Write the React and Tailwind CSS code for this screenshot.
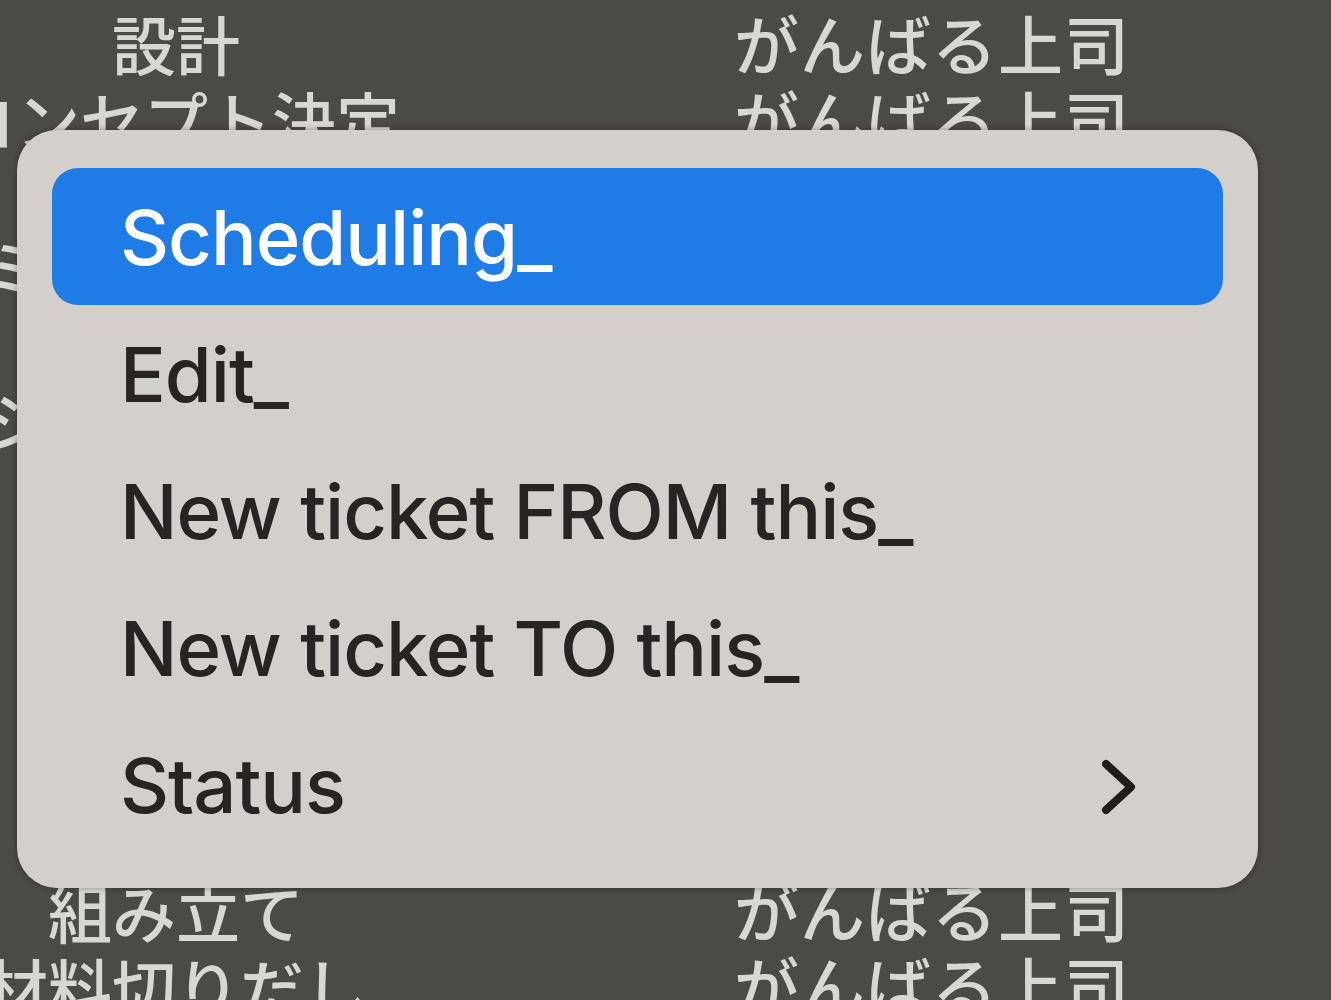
const bgRows = [
  { left: "設計", right: "がんばる上司", h: "h-[84px]" },
  { left: "コンセプト決定", right: "がんばる上司", h: "h-[68px]" },
  { left: "部品発注", right: "がんばる上司", h: "h-[76px]" },
  { left: "シミュレーション", right: "がんばる上司", h: "h-[76px]" },
  { left: "試作", right: "がんばる上司", h: "h-[76px]" },
  { left: "シャーシ調整", right: "がんばる上司", h: "h-[76px]" },
  { left: "検品", right: "がんばる上司", h: "h-[76px]" },
  { left: "検品", right: "がんばる上司", h: "h-[76px]" },
  { left: "塗装", right: "がんばる上司", h: "h-[76px]" },
  { left: "仕上げ", right: "がんばる上司", h: "h-[76px]" },
  { left: "梱包", right: "がんばる上司", h: "h-[112px]" },
  { left: "組み立て", right: "がんばる上司", h: "h-[75px]" },
  { left: "材料切りだし", right: "がんばる上司", h: "h-[75px]" },
];

const items = ["Scheduling_", "Edit_", "New ticket FROM this_", "New ticket TO this_", "Status"];

export default function App() {
  return (
    <div className="relative h-[1000px] w-[1331px] overflow-hidden bg-[#4b4a46] font-['Noto_Sans_CJK_JP',sans-serif] blur-[0.6px]">
      {/* table behind the menu */}
      <div className="flex flex-col">
        {bgRows.map((r, i) => (
          <div key={i} className={`flex ${r.h} shrink-0 items-center`}>
            <div className="flex w-[352px] shrink-0 justify-center">
              <span className="whitespace-nowrap text-[64px] font-medium leading-none text-[#d9d7d3]">{r.left}</span>
            </div>
            <div className="ml-[382px] whitespace-nowrap text-[65px] font-medium leading-none tracking-[1px] text-[#d9d7d3]">
              {r.right}
            </div>
          </div>
        ))}
      </div>

      {/* context menu */}
      <div className="absolute left-[17px] top-[130px] w-[1241px] rounded-[40px] bg-[#d3d0cc] px-[35px] pb-[35px] pt-[38px] shadow-[0_0_6px_rgba(0,0,0,0.35)] font-['Inter',sans-serif]">
        {items.map((label, i) => (
          <div
            key={label}
            className={`flex h-[137px] items-center justify-between rounded-[26px] pl-[68px] pr-[84px] text-[76px] font-medium tracking-[-1px] ${
              i === 0 ? "bg-[#1f7be6] text-white" : "text-[#262523]"
            }`}
          >
            <span className="whitespace-nowrap">{label}</span>
            {label === "Status" && (
              <svg width="40" height="60" viewBox="0 0 40 60" className="mt-[6px] text-[#1f1e1c]">
                <polyline points="7,6 32,29 7,52" fill="none" stroke="currentColor" strokeWidth="8" strokeLinecap="round" strokeLinejoin="round" />
              </svg>
            )}
          </div>
        ))}
      </div>
    </div>
  );
}
